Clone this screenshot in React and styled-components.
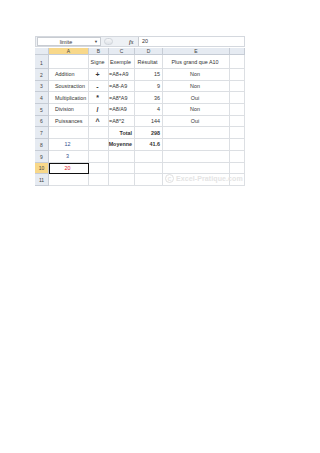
import styled, { createGlobalStyle } from 'styled-components'

const Global = createGlobalStyle`
  html, body {
    margin: 0;
    background: #ffffff;
  }
  body {
    font-family: "Liberation Sans", Arial, sans-serif;
  }
`

const Page = styled.div`
  width: 320px;
  height: 453px;
  padding: 36px 0 0 35px;
  box-sizing: border-box;
`

const Window = styled.div`
  width: 210px;
  position: relative;
`

const FormulaBar = styled.div`
  display: flex;
  align-items: center;
  height: 9px;
  background: #eef1f5;
  border: 1px solid #d4d8de;
  padding: 0 0 0 1px;
  gap: 3px;
`

const NameBox = styled.div`
  display: flex;
  align-items: center;
  width: 62px;
  height: 7px;
  background: #fff;
  border: 1px solid #c8ccd2;
  font-size: 5.4px;
  color: #333;
`

const NameText = styled.span`
  flex: 1;
  text-align: center;
`

const Arrow = styled.span`
  font-size: 4px;
  color: #444;
  padding-right: 2px;
`

const Handle = styled.div`
  width: 9px;
  height: 7px;
  border-radius: 4px;
  background: linear-gradient(#f6f7f9, #dfe3e8);
  border: 1px solid #cfd4da;
  box-sizing: border-box;
`

const Fx = styled.span`
  font-family: "Liberation Serif", serif;
  font-style: italic;
  font-weight: bold;
  font-size: 5.5px;
  color: #555;
  margin-left: 13px;
  width: 6px;
`

const FormulaInput = styled.div`
  flex: 1;
  height: 9px;
  background: #fff;
  border-left: 1px solid #c8ccd2;
  font-size: 5.4px;
  line-height: 9px;
  padding-left: 3px;
  color: #333;
`

const Grid = styled.div`
  display: grid;
  grid-template-columns: 14px 40px 20px 26px 28px 67px 15px;
  grid-template-rows: 7px 14px repeat(10, 11.7px);
  margin-top: 1px;
`

const Head = styled.div`
  display: flex;
  align-items: ${p => (p.$row ? 'flex-end' : 'center')};
  justify-content: center;
  font-size: 5px;
  color: #444;
  background: ${p => (p.$active ? '#f8d88a' : '#e6ebf2')};
  border-right: 1px solid #c6ccd5;
  border-bottom: 1px solid #c6ccd5;
  box-sizing: border-box;
  padding-bottom: ${p => (p.$row ? '2px' : '0')};
`

const Cell = styled.div`
  display: flex;
  align-items: center;
  justify-content: ${p => p.$align || 'flex-start'};
  padding: 0 2px 0 ${p => (p.$align ? '0' : '6px')};
  font-size: ${p => (p.$sign ? '7px' : '5.4px')};
  font-weight: ${p => (p.$bold ? 'bold' : 'normal')};
  color: ${p => p.$color || '#333'};
  border-right: 1px solid #dcdfe3;
  border-bottom: 1px solid #dcdfe3;
  box-sizing: border-box;
  white-space: nowrap;
  overflow: visible;
  ${p => p.$top && 'align-items: flex-start; padding-top: 4px;'}
  ${p => p.$activeCell && 'outline: 1.5px solid #111; outline-offset: -1px; z-index: 1;'}
`

const Corner = styled(Head)`
  background: #e6ebf2;
`

const Watermark = styled.div`
  position: absolute;
  left: 130px;
  top: 138px;
  display: flex;
  align-items: center;
  gap: 2px;
  font-size: 7px;
  font-weight: bold;
  color: #e4e4e4;
  white-space: nowrap;
  letter-spacing: 0.1px;
`

const Copy = styled.span`
  display: inline-flex;
  align-items: center;
  justify-content: center;
  width: 7px;
  height: 7px;
  border: 1px solid #e0e0e0;
  border-radius: 50%;
  font-size: 5px;
`

const cols = ['A', 'B', 'C', 'D', 'E', '']

const rows = [
  { n: 1, cells: [{}, { t: 'Signe', a: 'center', top: 1 }, { t: 'Exemple', a: 'center', top: 1 }, { t: 'Résultat', a: 'center', top: 1 }, { t: 'Plus grand que A10', a: 'center', top: 1 }, {}] },
  { n: 2, cells: [{ t: 'Addition' }, { t: '+', a: 'center', b: 1, s: 1 }, { t: '=A8+A9', a: 'flex-start' }, { t: '15', a: 'flex-end' }, { t: 'Non', a: 'center' }, {}] },
  { n: 3, cells: [{ t: 'Soustraction' }, { t: '-', a: 'center', b: 1, s: 1 }, { t: '=A8-A9', a: 'flex-start' }, { t: '9', a: 'flex-end' }, { t: 'Non', a: 'center' }, {}] },
  { n: 4, cells: [{ t: 'Multiplication' }, { t: '*', a: 'center', b: 1, s: 1 }, { t: '=A8*A9', a: 'flex-start' }, { t: '36', a: 'flex-end' }, { t: 'Oui', a: 'center' }, {}] },
  { n: 5, cells: [{ t: 'Division' }, { t: '/', a: 'center', b: 1, s: 1 }, { t: '=A8/A9', a: 'flex-start' }, { t: '4', a: 'flex-end' }, { t: 'Non', a: 'center' }, {}] },
  { n: 6, cells: [{ t: 'Puissances' }, { t: '^', a: 'center', b: 1, s: 1 }, { t: '=A8^2', a: 'flex-start' }, { t: '144', a: 'flex-end' }, { t: 'Oui', a: 'center' }, {}] },
  { n: 7, cells: [{}, {}, { t: 'Total', a: 'flex-end', b: 1 }, { t: '298', a: 'flex-end', b: 1 }, {}, {}] },
  { n: 8, cells: [{ t: '12', a: 'center', c: '#2f4f8f' }, {}, { t: 'Moyenne', a: 'flex-end', b: 1 }, { t: '41.6', a: 'flex-end', b: 1 }, {}, {}] },
  { n: 9, cells: [{ t: '3', a: 'center', c: '#2f4f8f' }, {}, {}, {}, {}, {}] },
  { n: 10, active: true, cells: [{ t: '20', a: 'center', c: '#e0242c', active: 1 }, {}, {}, {}, {}, {}] },
  { n: 11, cells: [{}, {}, {}, {}, {}, {}] },
]

export default function App() {
  return (
    <Page>
      <Global />
      <Window>
        <FormulaBar>
          <NameBox>
            <NameText>limite</NameText>
            <Arrow>▼</Arrow>
          </NameBox>
          <Handle />
          <Fx>fx</Fx>
          <FormulaInput>20</FormulaInput>
        </FormulaBar>
        <Grid>
          <Corner />
          {cols.map((c, i) => (
            <Head key={i} $active={c === 'A'}>{c}</Head>
          ))}
          {rows.map(r => [
            <Head key={'h' + r.n} $row $active={r.active}>{r.n}</Head>,
            ...r.cells.map((c, i) => (
              <Cell
                key={r.n + '-' + i}
                $align={c.a}
                $bold={c.b}
                $sign={c.s}
                $color={c.c}
                $top={c.top}
                $activeCell={c.active}
              >
                {c.t}
              </Cell>
            )),
          ])}
        </Grid>
        <Watermark>
          <Copy>C</Copy>
          Excel-Pratique.com
        </Watermark>
      </Window>
    </Page>
  )
}
